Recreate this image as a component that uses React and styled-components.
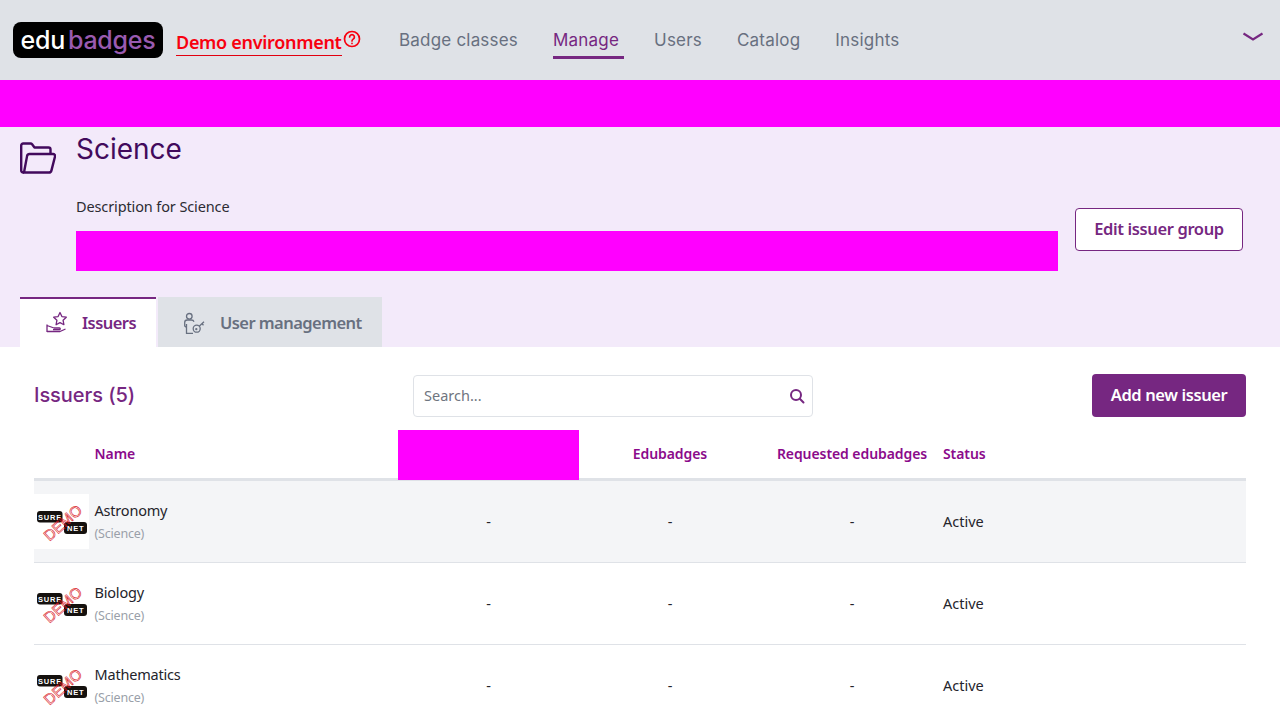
import React from 'react';
import styled, {createGlobalStyle} from 'styled-components';

const SANS = '"Noto Sans", "Open Sans", sans-serif';
const WIDE = 'Inter, "Noto Sans", sans-serif';
const PURPLE = '#762781';

const Global = createGlobalStyle`
    html, body {
        margin: 0;
        height: 720px;
        overflow: hidden;
        background: #fff;
        font-family: ${SANS};
        color: #24242b;
    }
    * {
        box-sizing: border-box;
    }
`;

const Header = styled.header`
    display: flex;
    align-items: center;
    height: 80px;
    padding: 0 17px 0 13px;
    background: #dfe2e7;
`;

const Logo = styled.div`
    display: flex;
    align-items: center;
    justify-content: center;
    width: 150px;
    height: 36px;
    border-radius: 8px;
    background: #000;
    font-family: ${WIDE};
    font-size: 25px;
    font-weight: 500;
    letter-spacing: -0.25px;
    color: #fff;

    span {
        margin-left: 3px;
        color: #9a5bb0;
    }
`;

const Demo = styled.div`
    display: flex;
    align-items: flex-start;
    width: 223px;
    margin-left: 13px;
    margin-top: 6px;
`;

const DemoText = styled.span`
    display: block;
    width: 166px;
    height: 26px;
    border-bottom: 1px solid #e2000f;
    font-size: 18px;
    font-weight: 600;
    line-height: 24px;
    letter-spacing: -0.3px;
    white-space: nowrap;
    color: #f8000f;
`;

const HelpIcon = styled.svg`
    width: 18px;
    height: 18px;
    margin-left: 1px;
`;

const Nav = styled.nav`
    display: flex;
    gap: 35px;
    height: 80px;
`;

const NavItem = styled.a`
    position: relative;
    display: flex;
    align-items: center;
    font-family: ${WIDE};
    font-size: 17px;
    letter-spacing: 0.2px;
    color: ${p => (p.$active ? PURPLE : '#687080')};

    &::after {
        content: '';
        display: ${p => (p.$active ? 'block' : 'none')};
        position: absolute;
        left: 0;
        right: -5px;
        top: 56px;
        height: 3px;
        background: ${PURPLE};
    }
`;

const Chevron = styled.svg`
    width: 20px;
    height: 10px;
    margin-left: auto;
    margin-top: -6px;
`;

const MagentaBar = styled.div`
    height: 47px;
    background: #ff00ff;
`;

const Hero = styled.section`
    display: flex;
    flex-direction: column;
    height: 220px;
    padding: 0 37px 0 20px;
    background: #f3eafa;
`;

const HeroTop = styled.div`
    display: flex;
    height: 170px;
`;

const FolderIcon = styled.svg`
    flex: none;
    width: 36px;
    height: 32px;
    margin-top: 15px;
`;

const HeroBody = styled.div`
    display: flex;
    flex-direction: column;
    flex: none;
    width: 982px;
    margin-left: 20px;
`;

const Title = styled.h1`
    margin: 2px 0 0;
    font-family: ${WIDE};
    font-size: 28px;
    font-weight: 400;
    line-height: 40px;
    color: #420a5c;
`;

const Description = styled.p`
    margin: 27px 0 0;
    font-size: 14.5px;
    line-height: 20px;
    letter-spacing: -0.12px;
    color: #2c2c33;
`;

const DescriptionBar = styled.div`
    height: 40px;
    margin-top: 15px;
    background: #ff00ff;
`;

const EditButton = styled.button`
    align-self: flex-start;
    width: 168px;
    height: 43px;
    margin-top: 81px;
    margin-left: 17px;
    padding: 0 0 2px;
    border: 1px solid ${PURPLE};
    border-radius: 4px;
    background: #fff;
    font-family: ${SANS};
    font-size: 16.5px;
    font-weight: 600;
    letter-spacing: -0.38px;
    color: ${PURPLE};
`;

const Tabs = styled.div`
    display: flex;
    gap: 2px;
    height: 50px;
`;

const Tab = styled.div`
    display: flex;
    align-items: center;
    gap: ${p => p.$gap}px;
    width: ${p => p.$width}px;
    padding: 0 0 2px 24px;
    border-top: 2px solid ${p => (p.$active ? PURPLE : '#dfe2e7')};
    background: ${p => (p.$active ? '#fff' : '#dfe2e7')};
    font-size: 16.5px;
    font-weight: 600;
    letter-spacing: -0.55px;
    color: ${p => (p.$active ? PURPLE : '#687080')};

    svg {
        flex: none;
        width: 24px;
        height: 24px;
    }
`;

const Content = styled.main`
    padding: 27px 34px 0;
`;

const Toolbar = styled.div`
    display: flex;
    align-items: center;
    height: 43px;
`;

const ListTitle = styled.h2`
    width: 379px;
    margin: 0 0 1px;
    font-family: ${WIDE};
    font-size: 20px;
    font-weight: 500;
    letter-spacing: -0.05px;
    color: ${PURPLE};
`;

const Search = styled.div`
    display: flex;
    align-items: center;
    justify-content: space-between;
    width: 400px;
    height: 42px;
    padding: 0 7px 2px 10px;
    border: 1px solid #dfe2e7;
    border-radius: 4px;
    font-size: 14.5px;
    color: #6f7580;

    svg {
        width: 16px;
        height: 16px;
        margin-top: 2px;
    }
`;

const AddButton = styled.button`
    width: 154px;
    height: 43px;
    margin-left: auto;
    padding: 0 0 2px;
    border: 0;
    border-radius: 4px;
    background: ${PURPLE};
    font-family: ${SANS};
    font-size: 16.5px;
    font-weight: 600;
    letter-spacing: -0.4px;
    color: #fff;
`;

const HeadRow = styled.div`
    display: grid;
    grid-template-columns: 364px 181px 182px 182px 1fr;
    align-items: center;
    height: 51px;
    margin-top: 13px;
    border-bottom: 3px solid #dfe2e7;
    font-size: 14px;
    font-weight: 600;
    letter-spacing: -0.08px;
    color: #8b0a8b;
`;

const HeadCell = styled.div`
    margin-top: -4px;
    padding-left: ${p => p.$pad || 0}px;
    text-align: ${p => (p.$center ? 'center' : 'left')};
    white-space: nowrap;
`;

const HeadMagenta = styled.div`
    align-self: start;
    height: 50px;
    background: #ff00ff;
`;

const Row = styled.div`
    display: grid;
    grid-template-columns: 364px 181px 182px 182px 1fr;
    align-items: center;
    height: 82px;
    padding-bottom: 1px;
    border-bottom: 1px solid #dfe2e7;
    background: ${p => (p.$hover ? '#f4f5f7' : '#fff')};
    font-size: 14.5px;
`;

const NameCell = styled.div`
    display: flex;
    align-items: center;
    gap: 5.5px;
`;

const IssuerLogo = styled.svg`
    flex: none;
    width: 55px;
    height: 55px;
    background: #fff;
`;

const NameBlock = styled.div`
    display: flex;
    flex-direction: column;
    gap: 4px;
    margin-top: 1px;
    letter-spacing: -0.2px;
`;

const Name = styled.span`
    line-height: 20px;
`;

const Group = styled.span`
    font-size: 12.5px;
    line-height: 20px;
    color: #9a9fa9;
`;

const Cell = styled.div`
    text-align: ${p => (p.$center ? 'center' : 'left')};
`;

const ISSUERS = ['Astronomy', 'Biology', 'Mathematics'];

function DemoLogo() {
    return (
        <IssuerLogo viewBox="0 0 55 55">
            <rect x="3" y="17" width="25.500" height="11.500" rx="3" fill="#15110e" />
            <rect x="30" y="28" width="23" height="12" rx="3" fill="#15110e" />
            <text x="15.800" y="25.600" textAnchor="middle" fontFamily="Liberation Sans" fontWeight="700" fontSize="7.500" letterSpacing="0.8" fill="#fff">SURF</text>
            <text x="41.800" y="36.800" textAnchor="middle" fontFamily="Liberation Sans" fontWeight="700" fontSize="7.500" letterSpacing="0.8" fill="#fff">NET</text>
            <text x="29" y="34" textAnchor="middle" transform="rotate(-42 29 29)" fontFamily="Liberation Sans" fontSize="15" fill="none" stroke="#d8141c" strokeWidth="0.600">DEMO</text>
        </IssuerLogo>
    );
}

export default function App() {
    return (
        <>
            <Global />
            <Header>
                <Logo>edu<span>badges</span></Logo>
                <Demo>
                    <DemoText>Demo environment</DemoText>
                    <HelpIcon viewBox="0 0 18 18" fill="none" stroke="#f8000f" strokeWidth="1.700" strokeLinecap="round">
                        <circle cx="9" cy="9" r="7.500" />
                        <path d="M6.600 7a2.400 2.400 0 1 1 3.600 2.100c-.8.5-1.200 1-1.200 1.900" />
                        <path d="M9 13.400v.1" />
                    </HelpIcon>
                </Demo>
                <Nav>
                    <NavItem>Badge classes</NavItem>
                    <NavItem $active>Manage</NavItem>
                    <NavItem>Users</NavItem>
                    <NavItem>Catalog</NavItem>
                    <NavItem>Insights</NavItem>
                </Nav>
                <Chevron viewBox="0 0 20 10" fill="none" stroke={PURPLE} strokeWidth="2.200">
                    <path d="M0.500 1.500L10 7.500L19.500 1.500" />
                </Chevron>
            </Header>
            <MagentaBar />
            <Hero>
                <HeroTop>
                    <FolderIcon viewBox="0 0 36 32" fill="none" stroke="#420a5c" strokeWidth="2.400" strokeLinejoin="round">
                        <path d="M4 30.500H3.200a2 2 0 0 1-2-2V3.500a2 2 0 0 1 2-2h7.300a2 2 0 0 1 1.600.8L14.500 5.500H28.500a2 2 0 0 1 2 2v4" />
                        <path d="M4 30.500h25a2.500 2.500 0 0 0 2.400-1.900L35 14.500a2 2 0 0 0-2-2.500H9.500a2.500 2.500 0 0 0-2.400 1.900L4 30.500z" />
                    </FolderIcon>
                    <HeroBody>
                        <Title>Science</Title>
                        <Description>Description for Science</Description>
                        <DescriptionBar />
                    </HeroBody>
                    <EditButton>Edit issuer group</EditButton>
                </HeroTop>
                <Tabs>
                    <Tab $active $width={136} $gap={14}>
                        <svg viewBox="0 0 24 24" fill="none" stroke={PURPLE} strokeWidth="1.300" strokeLinejoin="round">
                            <path d="M16 2.500l1.900 4.100 4.400.6-3.200 3.100.8 4.400-3.900-2.100-3.900 2.100.8-4.400-3.200-3.100 4.400-.6z" />
                            <path d="M3 14.500v7.500M3 15.500l7 2.500h5.500c1 0 1 1.700 0 1.700H9M3 21.500h13l5.500-2.500" />
                        </svg>
                        Issuers
                    </Tab>
                    <Tab $width={224} $gap={14}>
                        <svg viewBox="0 0 24 24" fill="none" stroke="#687080" strokeWidth="1.300" strokeLinejoin="round">
                            <circle cx="7.300" cy="6.300" r="2.800" />
                            <path d="M4.500 20v-2.500L2.700 16v-3.500c0-1.500 1-2.500 2.500-2.500h4.200c1.300 0 2.200.6 2.600 1.700M4.500 14v9.500h6.500" />
                            <circle cx="14.700" cy="18.700" r="3.500" />
                            <path d="M17.200 16.200L22 11.800M20 13.800l1.500 1.500" />
                            <circle cx="14.300" cy="19.200" r="0.500" />
                        </svg>
                        User management
                    </Tab>
                </Tabs>
            </Hero>
            <Content>
                <Toolbar>
                    <ListTitle>Issuers (5)</ListTitle>
                    <Search>
                        Search...
                        <svg viewBox="0 0 16 16" fill="none" stroke={PURPLE} strokeWidth="2" strokeLinecap="round">
                            <circle cx="7" cy="7" r="5" />
                            <path d="M10.800 10.800L14.500 14.500" />
                        </svg>
                    </Search>
                    <AddButton>Add new issuer</AddButton>
                </Toolbar>
                <HeadRow>
                    <HeadCell $pad={60.5}>Name</HeadCell>
                    <HeadMagenta />
                    <HeadCell $center>Edubadges</HeadCell>
                    <HeadCell $center>Requested edubadges</HeadCell>
                    <HeadCell>Status</HeadCell>
                </HeadRow>
                {ISSUERS.map((name, i) => (
                    <Row key={name} $hover={i === 0}>
                        <NameCell>
                            <DemoLogo />
                            <NameBlock>
                                <Name>{name}</Name>
                                <Group>(Science)</Group>
                            </NameBlock>
                        </NameCell>
                        <Cell $center>-</Cell>
                        <Cell $center>-</Cell>
                        <Cell $center>-</Cell>
                        <Cell>Active</Cell>
                    </Row>
                ))}
            </Content>
        </>
    );
}
